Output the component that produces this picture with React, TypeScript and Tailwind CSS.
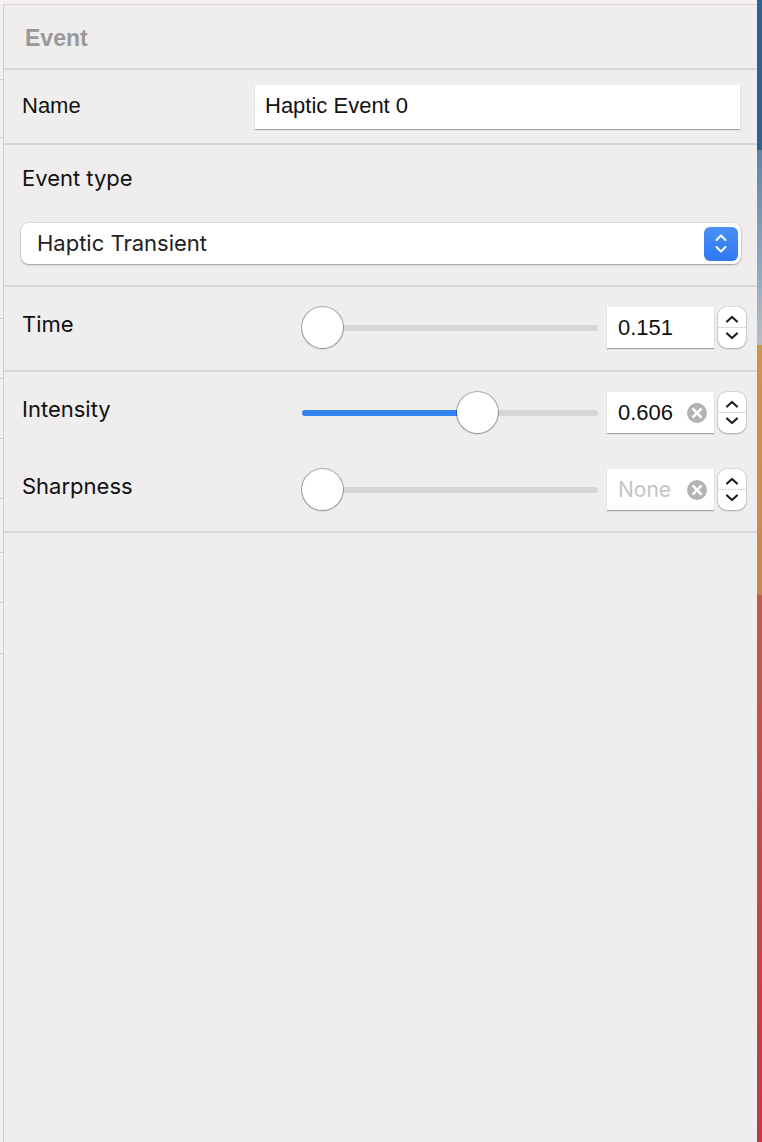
import React from "react";

const font = { fontFamily: "Inter, 'Liberation Sans', sans-serif" };
const helv = { fontFamily: "'Liberation Sans', Arial, sans-serif" };

function Stepper() {
  return (
    <div className="flex h-[41px] w-[28px] flex-col items-center justify-center rounded-[9px] bg-white shadow-[0_0_0_1px_rgba(0,0,0,0.08),0_1px_2px_rgba(0,0,0,0.25)]">
      <svg width="16" height="10" viewBox="0 0 16 10" className="mb-[3px]">
        <path d="M3 7.5 L8 3 L13 7.5" fill="none" stroke="#1f1f1f" strokeWidth="2.2" strokeLinecap="round" strokeLinejoin="round" />
      </svg>
      <div className="h-px w-full bg-[#dedede]" />
      <svg width="16" height="10" viewBox="0 0 16 10" className="mt-[3px]">
        <path d="M3 2.5 L8 7 L13 2.5" fill="none" stroke="#1f1f1f" strokeWidth="2.2" strokeLinecap="round" strokeLinejoin="round" />
      </svg>
    </div>
  );
}

function ClearIcon() {
  return (
    <svg width="20" height="20" viewBox="0 0 20 20">
      <circle cx="10" cy="10" r="10" fill="#b3b3b3" />
      <path d="M6.2 6.2 L13.8 13.8 M13.8 6.2 L6.2 13.8" stroke="white" strokeWidth="2.6" strokeLinecap="round" />
    </svg>
  );
}

function Slider({ thumbLeft, fill }: { thumbLeft: number; fill: number }) {
  return (
    <div className="relative h-[41px] flex-1">
      <div className="absolute left-0 right-0 top-[18px] h-[6px] rounded-full bg-[#d7d5d5]" />
      <div className="absolute left-0 top-[18px] h-[6px] rounded-full bg-[#3481f0]" style={{ width: fill }} />
      <div
        className="absolute top-0 h-[41px] w-[41px] rounded-full bg-white shadow-[0_0_0_1px_rgba(0,0,0,0.28),0_1px_2px_rgba(0,0,0,0.2)]"
        style={{ left: thumbLeft }}
      />
    </div>
  );
}

function NumberField({ value, placeholder, clear }: { value?: string; placeholder?: string; clear?: boolean }) {
  return (
    <div className="ml-[9px] flex h-[41px] w-[107px] items-center justify-between bg-white pl-[11px] pr-[7px] shadow-[0_1px_1px_rgba(0,0,0,0.3)]">
      {value ? (
        <span className="text-[22px] text-[#111]" style={helv}>{value}</span>
      ) : (
        <span className="text-[21px] text-[#c4c4c4]">{placeholder}</span>
      )}
      {clear && <ClearIcon />}
    </div>
  );
}

function SliderRow({
  label,
  thumbLeft,
  fill,
  value,
  placeholder,
  clear,
}: {
  label: string;
  thumbLeft: number;
  fill: number;
  value?: string;
  placeholder?: string;
  clear?: boolean;
}) {
  return (
    <div className="flex h-[41px] items-center pl-[18px] pr-[11px]">
      <div className="w-[280px] pb-[6px] text-[22px] text-[#111]">{label}</div>
      <Slider thumbLeft={thumbLeft} fill={fill} />
      <NumberField value={value} placeholder={placeholder} clear={clear} />
      <div className="ml-[4px]">
        <Stepper />
      </div>
    </div>
  );
}

function Divider() {
  return <div className="h-[2px] bg-[#d9d7d7]" />;
}

export default function App() {
  const ticks = [79, 137, 318, 378, 438, 498, 552, 602, 653];
  return (
    <div className="flex h-[1142px] w-[762px] overflow-hidden bg-[#efedee]" style={font}>
      <div className="relative w-[3px] bg-[#f2f0f0]">
        <div className="h-[4px] bg-[#f8eff0]" />
        {ticks.map((t) => (
          <div key={t} className="absolute left-0 h-px w-[3px] bg-[#cfcbcb]" style={{ top: t }} />
        ))}
      </div>
      <div className="flex flex-1 flex-col">
        <div className="h-[4px] bg-[#f8eff0]" />
        <div className="h-px bg-[#dcd7d8]" />
        <div className="flex flex-1">
          <div className="w-px bg-[#d3cfcf]" />
          <div className="flex flex-1 flex-col">
            <div className="flex h-[63px] items-center pl-[21px] pt-[3px] text-[23px] font-bold text-[#999]" style={helv}>
              Event
            </div>
            <Divider />

            <div className="flex h-[73px] items-center pl-[18px] pr-[17px]" style={helv}>
              <div className="w-[233px] pb-[3px] text-[22px] text-[#111]">Name</div>
              <div className="flex h-[44px] flex-1 items-center bg-white pb-[2px] pl-[10px] text-[22px] text-[#111] shadow-[0_1px_1px_rgba(0,0,0,0.3)]">
                Haptic Event 0
              </div>
            </div>
            <Divider />

            <div className="flex flex-col pb-[21px] pl-[17px] pr-[16px] pt-[20px]">
              <div className="pl-[1px] text-[22px] leading-[26px] text-[#111]">Event type</div>
              <div className="mt-[32px] flex h-[41px] items-center justify-between rounded-[8px] bg-white pl-[16px] pr-[3px] shadow-[0_0_0_1px_rgba(0,0,0,0.06),0_1px_2px_rgba(0,0,0,0.3)]">
                <span className="text-[22px] text-[#222]">Haptic Transient</span>
                <div className="flex h-[34px] w-[34px] flex-col items-center justify-center gap-[3px] rounded-[6px] bg-[linear-gradient(#4a90f8,#2f78f0)]">
                  <svg width="14" height="9" viewBox="0 0 14 9">
                    <path d="M2.5 7 L7 2.5 L11.5 7" fill="none" stroke="white" strokeWidth="2" strokeLinecap="round" strokeLinejoin="round" />
                  </svg>
                  <svg width="14" height="9" viewBox="0 0 14 9">
                    <path d="M2.5 2 L7 6.5 L11.5 2" fill="none" stroke="white" strokeWidth="2" strokeLinecap="round" strokeLinejoin="round" />
                  </svg>
                </div>
              </div>
            </div>
            <Divider />

            <div className="pb-[22px] pt-[20px]">
              <SliderRow label="Time" thumbLeft={0} fill={6} value="0.151" />
            </div>
            <Divider />

            <div className="flex flex-col gap-[36px] pb-[21px] pt-[20px]">
              <SliderRow label="Intensity" thumbLeft={155} fill={170} value="0.606" clear />
              <SliderRow label="Sharpness" thumbLeft={0} fill={0} placeholder="None" clear />
            </div>
            <Divider />
          </div>
        </div>
      </div>
      <div className="flex w-[5px] flex-col">
        <div className="h-[150px] bg-[#2d6392]" />
        <div className="h-[195px] bg-[linear-gradient(#5d84aa,#b5bfc9)]" />
        <div className="h-[250px] bg-[linear-gradient(#cf9446,#c9874b)]" />
        <div className="flex-1 bg-[linear-gradient(#c45a4a,#bf3a45)]" />
      </div>
    </div>
  );
}
